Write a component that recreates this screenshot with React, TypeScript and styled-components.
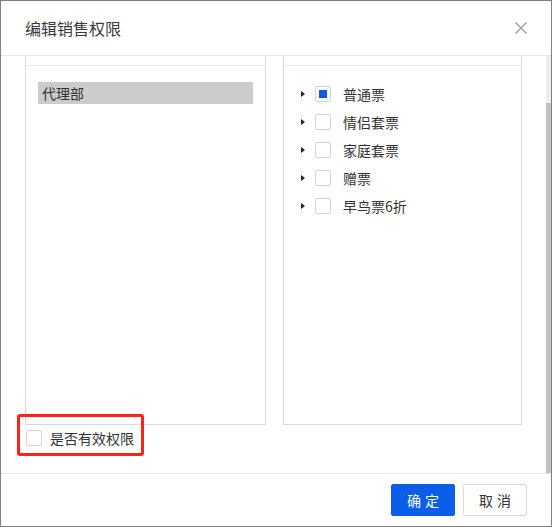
import React, { useLayoutEffect, useRef } from "react";
import styled, { createGlobalStyle } from "styled-components";

const GlobalStyle = createGlobalStyle`
  html, body {
    margin: 0;
    padding: 0;
    background: #7f7f7f;
    font-family: "Noto Sans CJK SC", "Noto Sans", sans-serif;
  }
  * { box-sizing: border-box; }
`;

const Dialog = styled.div`
  margin: 1px 0 0 1px;
  width: 550px;
  height: 525px;
  background: #ffffff;
  display: flex;
  flex-direction: column;
`;

const Header = styled.div`
  height: 55px;
  flex: none;
  display: flex;
  align-items: center;
  justify-content: space-between;
  padding: 0 24px;
  border-bottom: 1px solid #e8e8e8;
`;

const Title = styled.div`
  font-size: 16px;
  color: #3a3a3a;
  line-height: 22px;
  margin-top: -1px;
`;

const Close = styled.button`
  width: 12px;
  height: 12px;
  padding: 0;
  border: none;
  background: none;
  display: flex;
  margin-top: -1px;
`;

const Body = styled.div`
  flex: 1;
  min-height: 0;
  display: flex;
`;

const Scroller = styled.div`
  flex: 1;
  min-width: 0;
  overflow: hidden;
`;

const ScrollContent = styled.div`
  padding: 24px 24px 27px;
`;

const Track = styled.div`
  width: 5px;
  flex: none;
  background: #ededed;
  display: flex;
  flex-direction: column;
`;

const Thumb = styled.div<{ $offset: number }>`
  margin-top: ${(p) => p.$offset}px;
  flex: 1;
  background: #c1c1c1;
`;

const Panels = styled.div`
  display: grid;
  grid-template-columns: 241px 1fr;
  column-gap: 17px;
`;

const Panel = styled.div`
  height: 400px;
  border: 1px solid #d9d9d9;
  display: flex;
  flex-direction: column;
`;

const PanelHead = styled.div`
  height: 40px;
  flex: none;
  border-bottom: 1px solid #ececec;
`;

const PanelBody = styled.div<{ $pad: string }>`
  padding: ${(p) => p.$pad};
  display: flex;
  flex-direction: column;
`;

const DeptItem = styled.div<{ $active?: boolean }>`
  height: 22px;
  line-height: 22px;
  padding-left: 4px;
  font-size: 14px;
  color: #333;
  background: ${(p) => (p.$active ? "#cccccc" : "transparent")};
`;

const TreeRow = styled.div`
  height: 28px;
  display: flex;
  align-items: center;
`;

const CaretBox = styled.span`
  width: 16px;
  height: 16px;
  display: flex;
  align-items: center;
  justify-content: center;
  margin-right: 4px;
  &::before {
    content: "";
    display: block;
    width: 0;
    height: 0;
    border-top: 3px solid transparent;
    border-bottom: 3px solid transparent;
    border-left: 4px solid #222;
  }
`;

const Box = styled.span<{ $checked?: boolean }>`
  width: 16px;
  height: 16px;
  flex: none;
  border: 1px solid #d4d4d4;
  border-radius: 2px;
  background: #fff;
  display: flex;
  align-items: center;
  justify-content: center;
  &::after {
    content: "";
    display: ${(p) => (p.$checked ? "block" : "none")};
    width: 8px;
    height: 8px;
    background: #0a5eea;
  }
`;

const Label = styled.span<{ $gap: number }>`
  margin-left: ${(p) => p.$gap}px;
  font-size: 14px;
  line-height: 16px;
  color: #333;
`;

const ValidRow = styled.div`
  position: relative;
  margin-top: 5px;
  height: 16px;
  display: flex;
  align-items: center;
  padding-left: 1px;
`;

const Highlight = styled.div`
  position: absolute;
  top: -16px;
  left: -8px;
  width: 127px;
  height: 42px;
  border: 3px solid #ff2317;
  border-radius: 3px;
  pointer-events: none;
`;

const Footer = styled.div`
  height: 53px;
  flex: none;
  border-top: 1px solid #e8e8e8;
  display: flex;
  justify-content: flex-end;
  align-items: center;
  gap: 8px;
  padding: 0 24px 0 0;
`;

const Button = styled.button<{ $primary?: boolean }>`
  width: 64px;
  height: 32px;
  border-radius: 2px;
  font-family: "Noto Sans CJK SC", "Noto Sans", sans-serif;
  font-size: 14px;
  letter-spacing: 4px;
  text-indent: 4px;
  padding: 0;
  border: 1px solid ${(p) => (p.$primary ? "#0a5eea" : "#d9d9d9")};
  background: ${(p) => (p.$primary ? "#0a5eea" : "#ffffff")};
  color: ${(p) => (p.$primary ? "#ffffff" : "#333333")};
`;

const tickets = ["普通票", "情侣套票", "家庭套票", "赠票", "早鸟票6折"];

export default function App() {
  const scrollRef = useRef<HTMLDivElement>(null);
  useLayoutEffect(() => {
    const el = scrollRef.current;
    if (el) el.scrollTop = el.scrollHeight;
  }, []);

  return (
    <>
      <GlobalStyle />
      <Dialog>
        <Header>
          <Title>编辑销售权限</Title>
          <Close aria-label="close">
            <svg width="12" height="12" viewBox="0 0 12 12">
              <path d="M0.5 0.5 L11.5 11.5 M11.5 0.5 L0.5 11.5" stroke="#999" strokeWidth="1.3" fill="none" />
            </svg>
          </Close>
        </Header>
        <Body>
          <Scroller ref={scrollRef}>
            <ScrollContent>
              <Panels>
                <Panel>
                  <PanelHead />
                  <PanelBody $pad="16px 12px">
                    <DeptItem $active>代理部</DeptItem>
                  </PanelBody>
                </Panel>
                <Panel>
                  <PanelHead />
                  <PanelBody $pad="14px 12px 0 11px">
                    {tickets.map((t, i) => (
                      <TreeRow key={t}>
                        <CaretBox />
                        <Box $checked={i === 0} />
                        <Label $gap={12}>{t}</Label>
                      </TreeRow>
                    ))}
                  </PanelBody>
                </Panel>
              </Panels>
              <ValidRow>
                <Highlight />
                <Box />
                <Label $gap={8}>是否有效权限</Label>
              </ValidRow>
            </ScrollContent>
          </Scroller>
          <Track>
            <Thumb $offset={47} />
          </Track>
        </Body>
        <Footer>
          <Button $primary>确定</Button>
          <Button>取消</Button>
        </Footer>
      </Dialog>
    </>
  );
}
